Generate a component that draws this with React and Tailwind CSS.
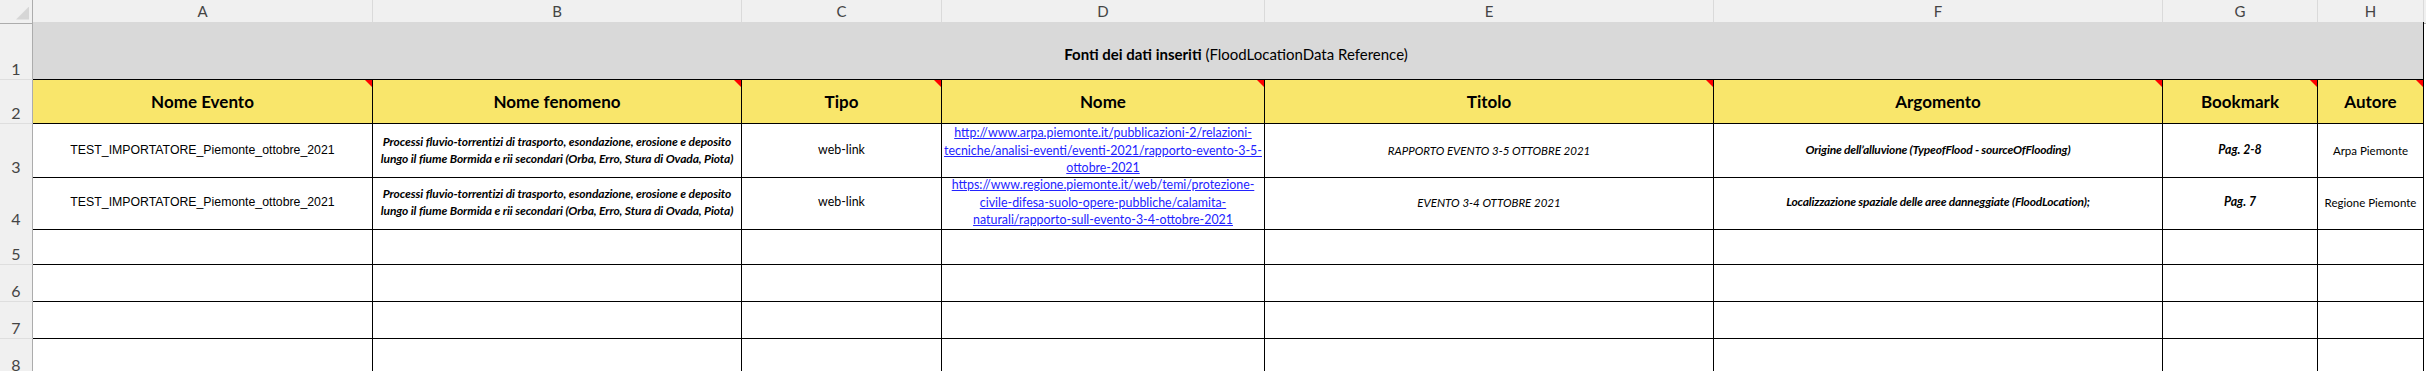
import React from 'react'

const cols = 'grid grid-cols-[33px_340px_369px_200px_323px_449px_449px_155px_106px_1fr]'

const letters = ['A', 'B', 'C', 'D', 'E', 'F', 'G', 'H']

const headers = ['Nome Evento', 'Nome fenomeno', 'Tipo', 'Nome', 'Titolo', 'Argomento', 'Bookmark', 'Autore']

const rows = [
  {
    n: 3,
    link: [
      'http://www.arpa.piemonte.it/pubblicazioni-2/relazioni-',
      'tecniche/analisi-eventi/eventi-2021/rapporto-evento-3-5-',
      'ottobre-2021',
    ],
    titolo: 'RAPPORTO EVENTO 3-5 OTTOBRE 2021',
    argomento: 'Origine dell’alluvione (TypeofFlood - sourceOfFlooding)',
    bookmark: 'Pag. 2-8',
    autore: 'Arpa Piemonte',
  },
  {
    n: 4,
    link: [
      'https://www.regione.piemonte.it/web/temi/protezione-',
      'civile-difesa-suolo-opere-pubbliche/calamita-',
      'naturali/rapporto-sull-evento-3-4-ottobre-2021',
    ],
    titolo: 'EVENTO 3-4 OTTOBRE 2021',
    argomento: 'Localizzazione spaziale delle aree danneggiate (FloodLocation);',
    bookmark: 'Pag. 7',
    autore: 'Regione Piemonte',
  },
]

function RowNum({ n }) {
  return (
    <div className="flex items-end justify-center pb-[2px] bg-[#f0f0f0] border-r border-b border-r-[#acacac] border-b-[#dedede] text-[16px] leading-none text-[#444] font-['Lato',sans-serif]">
      {n}
    </div>
  )
}

function Cell({ children, className = '' }) {
  return (
    <div className={`flex items-center justify-center text-center border-r border-b border-black overflow-visible whitespace-nowrap ${className}`}>
      {children}
    </div>
  )
}

function Flag() {
  return <span className="absolute top-0 right-0 w-[7px] h-[7px] bg-[#ff0000] [clip-path:polygon(0_0,100%_0,100%_100%)]" />
}

export default function App() {
  return (
    <div className="w-[2426px] h-[371px] overflow-hidden bg-white">
      {/* column letters */}
      <div className={`${cols} h-[22px]`}>
        <div className="relative bg-[#f0f0f0] border-r border-b border-[#acacac]">
          <span className="absolute right-[3px] bottom-[3px] w-[13px] h-[13px] bg-[#d6d6d6] [clip-path:polygon(100%_0,100%_100%,0_100%)]" />
        </div>
        {letters.map(l => (
          <div key={l} className="flex items-center justify-center bg-[#f0f0f0] border-r border-r-[#dadada] border-b border-b-[#acacac] text-[15px] text-[#444] font-['Lato',sans-serif]">
            {l}
          </div>
        ))}
        <div className="bg-[#f0f0f0] border-b border-[#acacac]" />
      </div>

      {/* row 1: merged title */}
      <div className={`${cols} h-[58px]`}>
        <RowNum n={1} />
        <div className="col-span-8 flex items-center justify-center pt-[7px] pl-[16px] bg-[#d9d9d9] border-r border-b border-black text-[15px] text-black font-['Lato',sans-serif]">
          <span className="font-bold">Fonti dei dati inseriti</span>
          <span>&nbsp;(FloodLocationData Reference)</span>
        </div>
        <div />
      </div>

      {/* row 2: headers */}
      <div className={`${cols} h-[44px]`}>
        <RowNum n={2} />
        {headers.map(h => (
          <Cell key={h} className="relative bg-[#f9e66b] font-bold text-[17px] font-['Lato',sans-serif]">
            {h}
            <Flag />
          </Cell>
        ))}
        <div />
      </div>

      {/* rows 3-4: data */}
      {rows.map(r => (
        <div key={r.n} className={`${cols} h-[52px]`}>
          <RowNum n={r.n} />
          <Cell className="text-[12.3px] font-['Liberation_Sans',sans-serif]">TEST_IMPORTATORE_Piemonte_ottobre_2021</Cell>
          <Cell className="flex-col font-bold italic text-[12px] leading-[17px] tracking-[-0.1px] font-['Lato',sans-serif]">
            <span>Processi fluvio-torrentizi di trasporto, esondazione, erosione e deposito</span>
            <span>lungo il fiume Bormida e rii secondari (Orba, Erro, Stura di Ovada, Piota)</span>
          </Cell>
          <Cell className="text-[12.4px] font-['Lato',sans-serif]">web-link</Cell>
          <Cell className="flex-col text-[12.4px] leading-[17.5px] text-[#2323ff] underline font-['Lato',sans-serif]">
            {r.link.map(l => <span key={l}>{l}</span>)}
          </Cell>
          <Cell className="italic text-[11.5px] font-['Lato',sans-serif]">{r.titolo}</Cell>
          <Cell className="font-bold italic text-[12px] tracking-[-0.2px] font-['Lato',sans-serif]">{r.argomento}</Cell>
          <Cell className="font-bold italic text-[12.3px] font-['Lato',sans-serif]">{r.bookmark}</Cell>
          <Cell className="text-[11.5px] font-['Lato',sans-serif]">{r.autore}</Cell>
          <div />
        </div>
      ))}

      {/* rows 5-8: empty */}
      {[5, 6, 7, 8].map(n => (
        <div key={n} className={`${cols} h-[37px]`}>
          <RowNum n={n} />
          {letters.map(l => <Cell key={l} />)}
          <div />
        </div>
      ))}
    </div>
  )
}
